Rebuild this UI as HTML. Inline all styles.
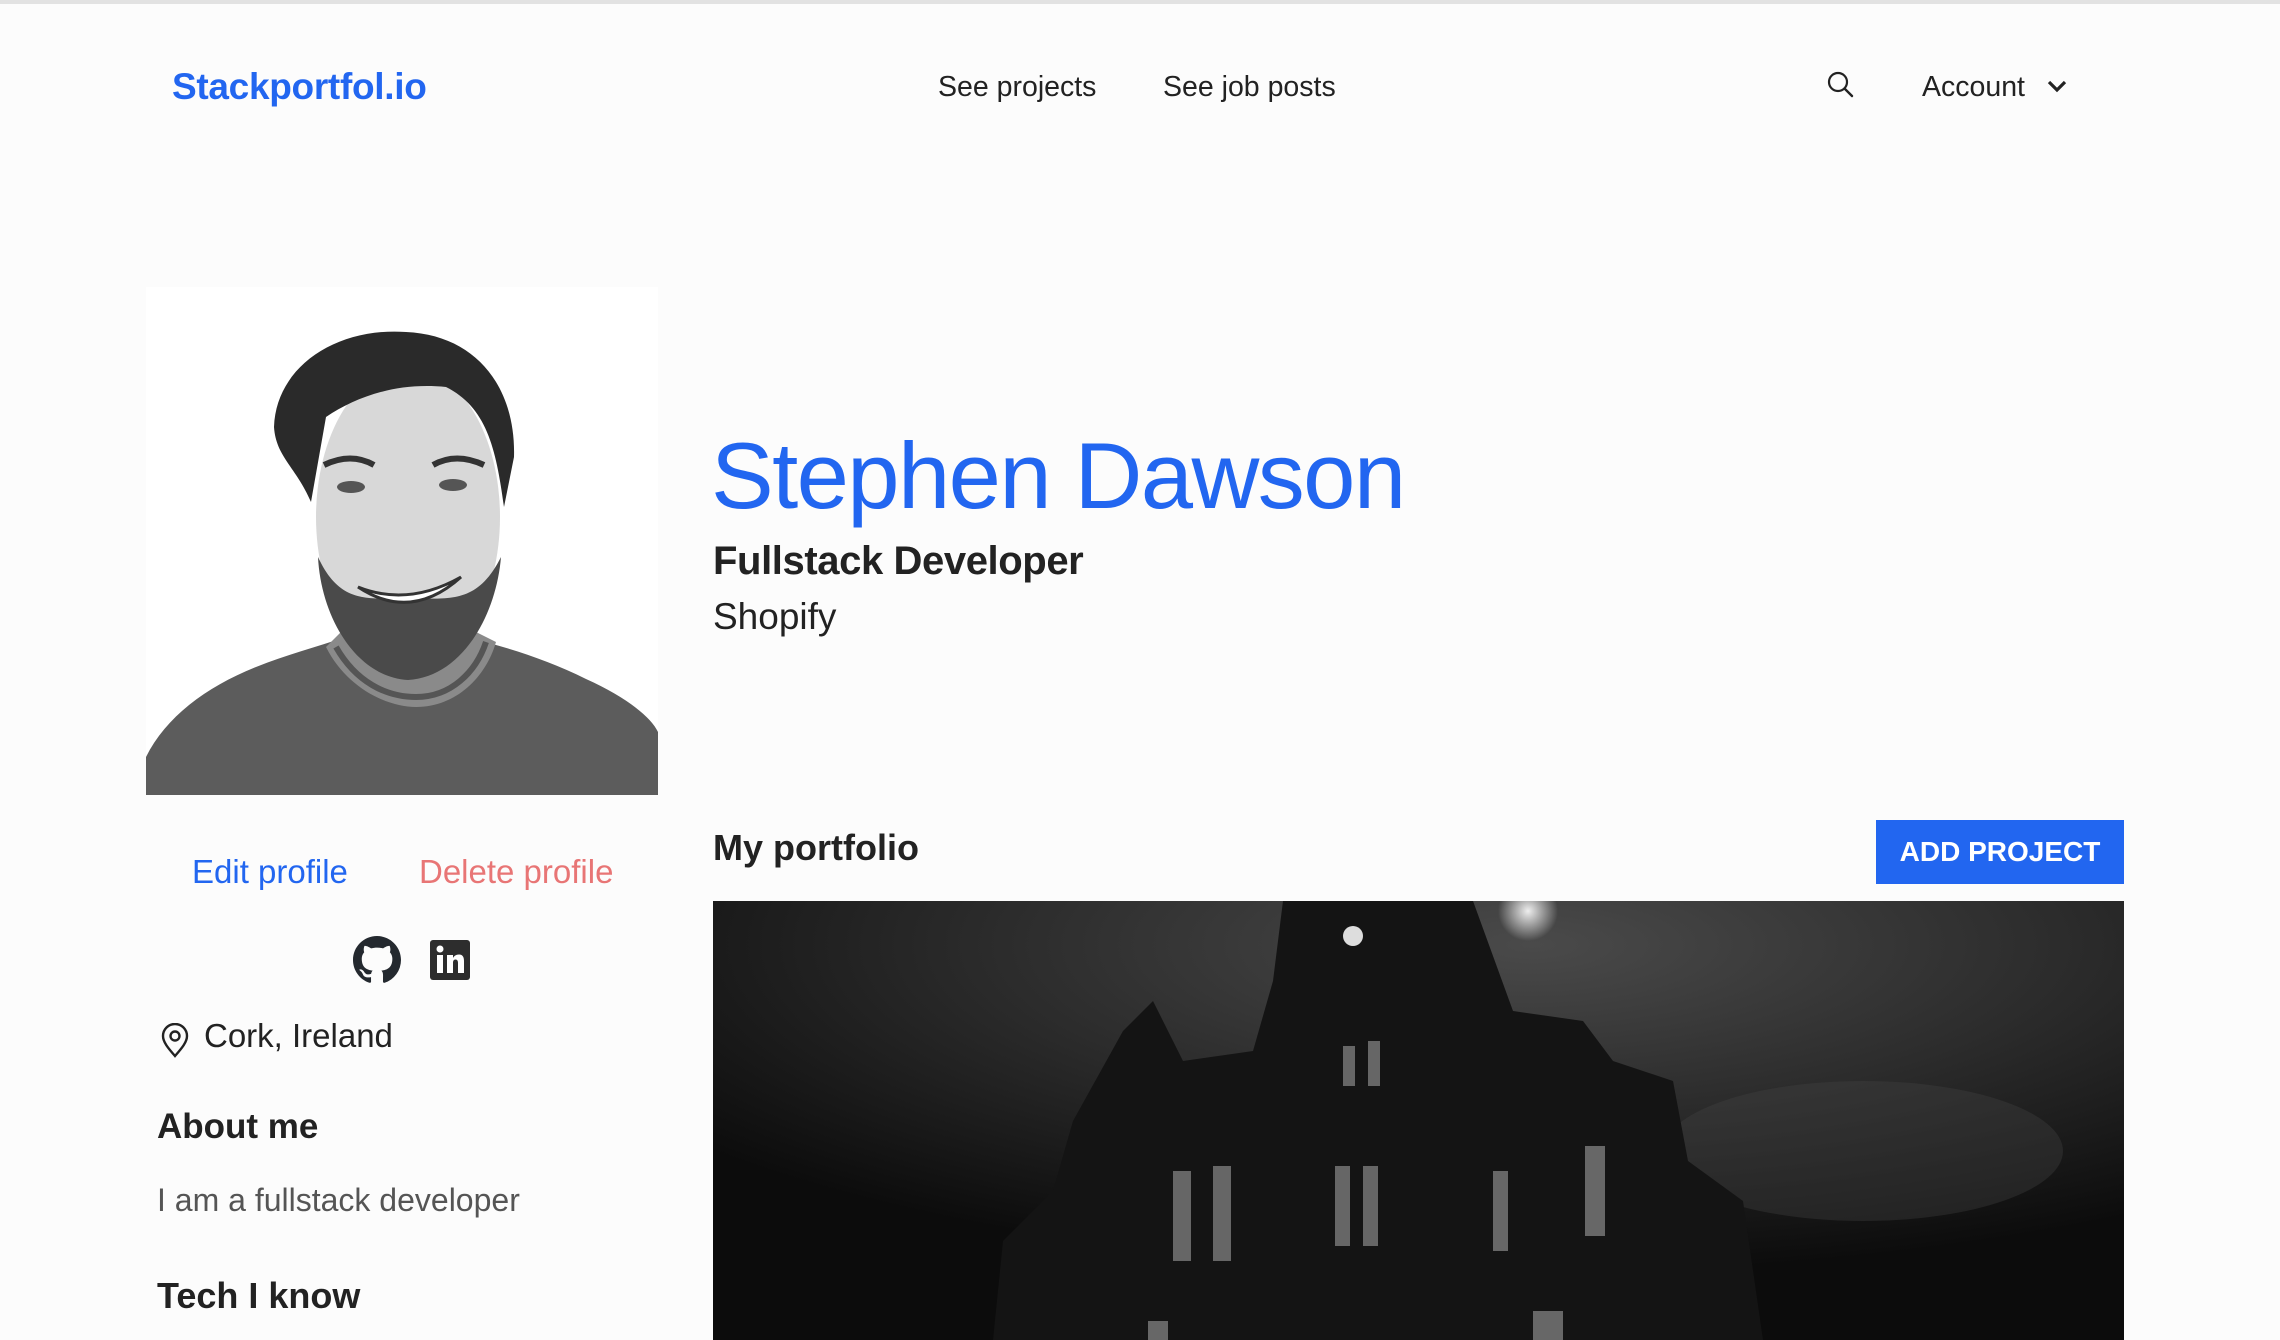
<!DOCTYPE html>
<html><head><meta charset="utf-8"><style>
html,body{margin:0;padding:0;}
body{width:2280px;height:1340px;overflow:hidden;background:#fcfcfc;font-family:"Liberation Sans",sans-serif;position:relative;color:#222;}
.a{position:absolute;white-space:nowrap;}
</style></head><body>
<div class="a" style="left:0;top:0;width:2280px;height:4px;background:#e2e2e2"></div>
<div class="a" style="left:172px;top:66px;font-size:37px;font-weight:bold;color:#2266f0;letter-spacing:-0.3px">Stackportfol.io</div>
<div class="a" style="left:938px;top:71px;font-size:28.5px;color:#222">See projects</div>
<div class="a" style="left:1163px;top:71px;font-size:28.5px;color:#222">See job posts</div>
<svg class="a" style="left:1826px;top:70px" width="30" height="30" viewBox="0 0 30 30"><circle cx="12" cy="12" r="9" fill="none" stroke="#222" stroke-width="2.2"/><line x1="18.5" y1="18.5" x2="26" y2="26" stroke="#222" stroke-width="2.4" stroke-linecap="round"/></svg>
<div class="a" style="left:1922px;top:71px;font-size:28.5px;color:#222">Account</div>
<svg class="a" style="left:2046px;top:78px" width="22" height="16" viewBox="0 0 22 16"><path d="M3 4 L11 12 L19 4" fill="none" stroke="#222" stroke-width="3.2"/></svg>

<svg class="a" style="left:146px;top:287px" width="512" height="508" viewBox="0 0 512 508">
<rect width="512" height="508" fill="#fff"/>
<path d="M0 470 C20 430 60 400 110 380 C140 368 170 360 200 350 L320 350 C360 360 400 372 440 392 C480 410 505 430 512 445 L512 508 L0 508Z" fill="#5c5c5c"/>
<path d="M180 360 C200 400 240 420 270 420 C310 420 340 390 350 355 L320 340 L200 340Z" fill="#8a8a8a"/>
<path d="M190 360 C210 395 240 410 270 410 C305 410 330 385 340 355" fill="none" stroke="#555" stroke-width="6"/>
<ellipse cx="262" cy="230" rx="92" ry="150" fill="#d8d8d8"/>
<path d="M172 270 C175 330 210 390 262 393 C315 390 350 330 355 270 C330 320 300 310 262 312 C225 310 195 320 172 270Z" fill="#4a4a4a"/>
<path d="M128 140 C130 80 190 40 260 45 C330 48 370 100 368 170 L358 220 C350 160 340 120 300 100 C250 95 210 110 180 130 L165 215 C150 180 130 170 128 140Z" fill="#2a2a2a"/>
<path d="M178 178 Q205 165 228 178" stroke="#333" stroke-width="6" fill="none"/>
<path d="M287 178 Q310 165 338 178" stroke="#333" stroke-width="6" fill="none"/>
<ellipse cx="205" cy="200" rx="14" ry="6" fill="#555"/>
<ellipse cx="307" cy="198" rx="14" ry="6" fill="#555"/>
<path d="M212 300 Q262 320 315 290 Q265 335 212 300Z" fill="#fff" stroke="#333" stroke-width="3"/>
</svg>

<div class="a" style="left:711px;top:422px;font-size:94px;color:#2266f0;letter-spacing:-1.6px">Stephen Dawson</div>
<div class="a" style="left:713px;top:539px;font-size:40px;font-weight:bold;color:#222;letter-spacing:-0.4px">Fullstack Developer</div>
<div class="a" style="left:713px;top:596px;font-size:37px;color:#222">Shopify</div>

<div class="a" style="left:192px;top:853px;font-size:33px;color:#2266f0">Edit profile</div>
<div class="a" style="left:419px;top:853px;font-size:33px;color:#e87575">Delete profile</div>

<svg class="a" style="left:353px;top:936px" width="48" height="48" viewBox="0 0 16 16"><path fill="#24292f" d="M8 0C3.58 0 0 3.58 0 8c0 3.54 2.29 6.53 5.470 7.59.4.07.55-.17.55-.38 0-.19-.01-.82-.01-1.49-2.01.37-2.530-.49-2.69-.94-.09-.23-.48-.94-.82-1.13-.28-.15-.68-.52-.01-.53.63-.01 1.08.58 1.23.82.72 1.21 1.87.87 2.33.66.07-.52.28-.87.51-1.07-1.78-.2-3.64-.89-3.64-3.95 0-.87.31-1.59.82-2.15-.08-.2-.36-1.02.08-2.12 0 0 .67-.21 2.2.82.64-.18 1.32-.27 2-.27.68 0 1.36.09 2 .27 1.53-1.04 2.2-.82 2.2-.82.44 1.1.16 1.92.08 2.12.51.56.82 1.27.82 2.15 0 3.07-1.87 3.75-3.65 3.95.29.25.54.73.54 1.48 0 1.07-.01 1.93-.01 2.2 0 .21.15.46.55.38A8.013 8.013 0 0016 8c0-4.42-3.58-8-8-8z"/></svg>
<svg class="a" style="left:430px;top:940px" width="40" height="40" viewBox="0 0 40 40"><rect width="40" height="40" rx="3" fill="#2d2d2d"/><rect x="7" y="15" width="6" height="18" fill="#fff"/><circle cx="10" cy="9" r="3.5" fill="#fff"/><path d="M17 15h6v3c1-2 3-3.5 6-3.5 4 0 5 3 5 6.5V33h-6V23c0-2-.6-3.5-2.5-3.5S23 21 23 23v10h-6z" fill="#fff"/></svg>

<svg class="a" style="left:160px;top:1023px" width="30" height="36" viewBox="0 0 30 36"><path d="M15 33 C8 25 3 19 3 13 A12 12 0 0 1 27 13 C27 19 22 25 15 33Z" fill="none" stroke="#222" stroke-width="2.4"/><circle cx="15" cy="13" r="4.5" fill="none" stroke="#222" stroke-width="2.4"/></svg>
<div class="a" style="left:204px;top:1017px;font-size:33px;color:#222">Cork, Ireland</div>
<div class="a" style="left:157px;top:1107px;font-size:35px;font-weight:bold;color:#222">About me</div>
<div class="a" style="left:157px;top:1182px;font-size:32px;color:#555">I am a fullstack developer</div>
<div class="a" style="left:157px;top:1275px;font-size:36px;font-weight:bold;color:#222">Tech I know</div>

<div class="a" style="left:713px;top:827px;font-size:36px;font-weight:bold;color:#222">My portfolio</div>
<div class="a" style="left:1876px;top:820px;width:248px;height:64px;background:#2266f0;color:#fff;font-size:28px;font-weight:bold;line-height:64px;text-align:center">ADD PROJECT</div>

<svg class="a" style="left:713px;top:901px" width="1411" height="439" viewBox="0 0 1411 439">
<defs><radialGradient id="sky" cx="0.58" cy="0.1" r="0.75"><stop offset="0" stop-color="#4a4a4a"/><stop offset="0.5" stop-color="#2c2c2c"/><stop offset="1" stop-color="#0c0c0c"/></radialGradient>
<radialGradient id="moon" cx="0.5" cy="0.5" r="0.5"><stop offset="0" stop-color="#eee"/><stop offset="1" stop-color="#eee" stop-opacity="0"/></radialGradient></defs>
<rect width="1411" height="439" fill="url(#sky)"/>
<ellipse cx="1150" cy="250" rx="200" ry="70" fill="#444" opacity=".35"/>
<circle cx="815" cy="10" r="30" fill="url(#moon)"/>
<path d="M570 0 L760 0 L800 110 L870 120 L900 160 L960 180 L975 260 L1030 300 L1050 439 L280 439 L290 340 L340 290 L360 220 L410 130 L440 100 L470 160 L540 150 L560 80Z" fill="#141414"/>
<g fill="#8a8a8a" opacity=".7">
<rect x="630" y="145" width="12" height="40"/><rect x="655" y="140" width="12" height="45"/>
<rect x="460" y="270" width="18" height="90"/><rect x="500" y="265" width="18" height="95"/>
<rect x="622" y="265" width="15" height="80"/><rect x="650" y="265" width="15" height="80"/>
<rect x="780" y="270" width="15" height="80"/><rect x="872" y="245" width="20" height="90"/>
<rect x="435" y="420" width="20" height="19"/><rect x="820" y="410" width="30" height="29"/>
</g>
<circle cx="640" cy="35" r="10" fill="#ddd"/>
</svg>
</body></html>
